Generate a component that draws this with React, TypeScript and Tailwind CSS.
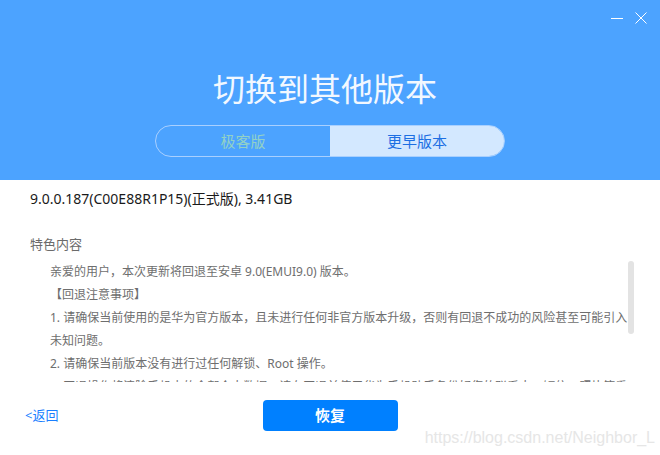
import React from "react";

const notes = [
  "亲爱的用户，本次更新将回退至安卓 9.0(EMUI9.0) 版本。",
  "【回退注意事项】",
  "1. 请确保当前使用的是华为官方版本，且未进行任何非官方版本升级，否则有回退不成功的风险甚至可能引入未知问题。",
  "2. 请确保当前版本没有进行过任何解锁、Root 操作。",
  "3. 回退操作将清除手机中的全部个人数据，请在回退前使用华为手机助手备份好您的联系人、短信、照片等重要数据。",
  "4. 回退过程中请保持手机电量充足，并保证数据线连接稳定，请勿拔出数据线或对手机进行任何操作，以免导致回退失败。",
];

export default function App() {
  return (
    <div className="relative w-[660px] h-[455px] flex flex-col bg-white overflow-hidden font-['Noto_Sans','Noto_Sans_CJK_SC',sans-serif]">
      {/* 顶部蓝色区域 */}
      <div className="h-[180px] bg-[#4ca3ff] flex flex-col items-center">
        <div className="w-full h-[36px] flex justify-end items-start pt-[12px] pr-[13px] gap-[12px]">
          <svg width="12" height="12" viewBox="0 0 12 12" className="text-white">
            <line x1="0" y1="6.5" x2="12" y2="6.5" stroke="currentColor" strokeWidth="1" />
          </svg>
          <svg width="12" height="12" viewBox="0 0 12 12" className="text-white">
            <line x1="0.5" y1="0.5" x2="11.5" y2="11.5" stroke="currentColor" strokeWidth="1" />
            <line x1="11.5" y1="0.5" x2="0.5" y2="11.5" stroke="currentColor" strokeWidth="1" />
          </svg>
        </div>
        <h1 className="mt-[33px] mr-[10px] h-[40px] leading-[40px] text-[32px] font-normal text-[#f2f8ff]">
          切换到其他版本
        </h1>
        <div className="mt-[16px] w-[350px] h-[32px] flex rounded-full border border-[#a9d0ff] overflow-hidden">
          <div className="flex-1 flex items-center justify-center text-[15px] text-[#92d1c6]">极客版</div>
          <div className="flex-1 flex items-center justify-center bg-[#d3e8ff] text-[15px] text-[#1c6fe3]">更早版本</div>
        </div>
      </div>

      {/* 版本信息 */}
      <div className="px-[30px]">
        <div className="mt-[9px] leading-[20px] text-[14px] text-[#1a1a1a]">
          9.0.0.187(C00E88R1P15)(正式版), 3.41GB
        </div>
        <div className="mt-[25px] leading-[20px] text-[13px] text-[#6b6b6b]">特色内容</div>
      </div>

      {/* 特色内容，带滚动条 */}
      <div className="relative mt-[6px] ml-[30px] w-[604px] h-[122px]">
        <div className="h-full overflow-hidden pl-[20px] pr-[6px] text-[12px] leading-[23px] text-[#6e6e6e]">
          {notes.map((line) => (
            <p key={line}>{line}</p>
          ))}
        </div>
        <div className="absolute right-0 top-[1px] w-[6px] h-[73px] rounded-full bg-[#e3e3e3]" />
      </div>

      {/* 底部操作 */}
      <div className="mt-[18px] grid grid-cols-[1fr_auto_1fr] items-center">
        <span className="pl-[25px] text-[13px] text-[#1a7fff]">&lt;返回</span>
        <button className="w-[135px] h-[31px] rounded-[4px] bg-[#0080ff] text-white text-[15px] font-bold">
          恢复
        </button>
        <span />
      </div>

      {/* 水印 */}
      <span className="absolute right-[5px] bottom-[8px] font-['Liberation_Sans',sans-serif] text-[16px] leading-[18px] text-[#e6e6e6]">
        https://blog.csdn.net/Neighbor_L
      </span>
    </div>
  );
}
